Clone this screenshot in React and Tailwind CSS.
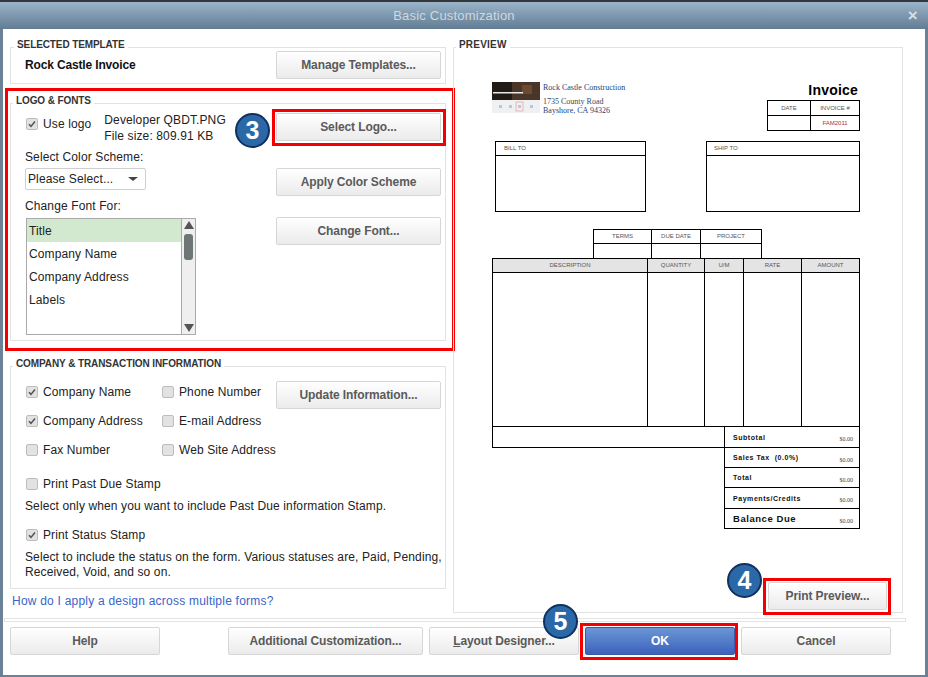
import React from 'react';

const FONT = "font-['Liberation_Sans',Arial,sans-serif]";

const Button = ({ children, className = '' }) => (
  <button className={`h-[28px] rounded-[2px] border border-[#d6d6d6] bg-gradient-to-b from-white to-[#ebebeb] text-[12px] font-bold tracking-[-0.1px] whitespace-nowrap text-[#5a5a5a] ${className}`}>
    {children}
  </button>
);

const Check = ({ checked, label, className = '' }) => (
  <div className={`flex items-center gap-[5px] text-[12px] tracking-[0.12px] whitespace-nowrap text-[#222] ${className}`}>
    <span className="flex h-[12px] w-[12px] items-center justify-center rounded-[2px] border border-[#bdbdbd] bg-[#e2e2e2]">
      {checked && (
        <svg width="10" height="10" viewBox="0 0 10 10" fill="none">
          <path d="M2 5.2 L4 7.4 L8 2.6" stroke="#555" strokeWidth="1.6" />
        </svg>
      )}
    </span>
    {label}
  </div>
);

const Group = ({ title, children, className = '', legendClass = 'left-[3px] tracking-[-0.1px]' }) => (
  <div className={`relative border border-[#e2e2e2] ${className}`}>
    <div className={`absolute -top-[10px] bg-white px-[3px] text-[10px] leading-[14px] font-bold text-[#333] ${legendClass}`}>
      {title}
    </div>
    {children}
  </div>
);

const Badge = ({ n, className = '' }) => (
  <div className={`absolute flex h-[35px] w-[35px] items-center justify-center rounded-full border-2 border-[#10305f] bg-[#2b68a8] text-[25px] font-bold text-white ${className}`}>
    {n}
  </div>
);

const Red = ({ className = '' }) => (
  <div className={`pointer-events-none absolute border-[3px] border-[#f50000] ${className}`} />
);

const Cell = ({ children, className = '' }) => (
  <div className={`flex items-center justify-center text-[6px] text-[#555] ${className}`}>{children}</div>
);

const TotalRow = ({ label, className = '', labelClass = 'text-[7px]' }) => (
  <div className={`flex items-center justify-between border-t border-black pr-[6px] pl-[8px] ${className}`}>
    <span className={`mt-[2px] font-bold tracking-[0.55px] whitespace-pre text-[#111] ${labelClass}`}>{label}</span>
    <span className="mt-[5px] font-['Liberation_Serif',serif] text-[6px] text-[#444]">$0.00</span>
  </div>
);

const Invoice = () => (
  <div className="ml-[38px] w-[368px] pt-[34px]">
    <div className="flex h-[49px] justify-between">
      <div className="flex">
        <svg width="48" height="31" viewBox="0 0 48 31">
          <rect width="48" height="31" fill="#eef0f1" />
          <rect width="48" height="18" fill="#221a14" />
          <rect x="20" width="28" height="18" fill="#4a3526" />
          <rect x="30" y="3" width="10" height="9" fill="#6b4a30" />
          <rect x="1" y="10" width="30" height="1.5" fill="#e8e8e8" />
          <rect x="24" y="20" width="7" height="9" fill="none" stroke="#e8a0a0" strokeWidth="0.7" />
          <rect x="7" y="23" width="3" height="3" fill="#b8c8d8" />
          <rect x="17" y="23" width="3" height="3" fill="#b8c8d8" />
          <rect x="26" y="23" width="3" height="3" fill="#b8c8d8" />
          <rect x="38" y="23" width="3" height="3" fill="#b8c8d8" />
        </svg>
        <div className="ml-[3px] font-['Liberation_Serif',serif] text-[8px] leading-[9px] text-[#1f3f73]">
          <div className="mt-[1px]">Rock Castle Construction</div>
          <div className="mt-[5px] text-[#3a4a5a]">1735 County Road</div>
          <div>Bayshore, CA 94326</div>
        </div>
      </div>
      <div className="flex w-[93px] flex-col">
        <div className="h-[19px] pt-[1px] pr-[2px] text-right text-[14px] leading-[14px] font-bold tracking-[0.2px] text-black">Invoice</div>
        <div className="h-[31px] border border-black">
          <div className="flex h-[15px] border-b border-black">
            <Cell className="w-[43px] border-r border-black">DATE</Cell>
            <Cell className="flex-1 text-[#8a4a4a]">INVOICE #</Cell>
          </div>
          <div className="flex h-[14px]">
            <div className="w-[43px] border-r border-black" />
            <Cell className="flex-1 text-[#a33]">FAM2011</Cell>
          </div>
        </div>
      </div>
    </div>
    <div className="mt-[10px] flex justify-between pl-[3px]">
      <div className="h-[71px] w-[151px] border border-black">
        <div className="flex h-[14px] items-center border-b border-black pl-[8px] text-[6px] text-[#555]">BILL TO</div>
      </div>
      <div className="h-[71px] w-[154px] border border-black">
        <div className="flex h-[14px] items-center border-b border-black pl-[7px] text-[6px] text-[#555]">SHIP TO</div>
      </div>
    </div>
    <div className="mt-[17px] ml-[101px] h-[29px] w-[169px] border-x border-t border-black">
      <div className="flex h-[14px] border-b border-black">
        <Cell className="w-[58px] border-r border-black">TERMS</Cell>
        <Cell className="w-[49px] border-r border-black">DUE DATE</Cell>
        <Cell className="flex-1 text-[#8a4a4a]">PROJECT</Cell>
      </div>
      <div className="flex h-[14px]">
        <div className="w-[58px] border-r border-black" />
        <div className="w-[49px] border-r border-black" />
      </div>
    </div>
    <div className="border border-black">
      <div className="flex h-[14px] border-b border-black bg-[#e4e4e4]">
        <Cell className="w-[155px] border-r border-black">DESCRIPTION</Cell>
        <Cell className="w-[57px] border-r border-black">QUANTITY</Cell>
        <Cell className="w-[39px] border-r border-black">U/M</Cell>
        <Cell className="w-[58px] border-r border-black">RATE</Cell>
        <Cell className="flex-1">AMOUNT</Cell>
      </div>
      <div className="flex h-[153px]">
        <div className="w-[155px] border-r border-black" />
        <div className="w-[57px] border-r border-black" />
        <div className="w-[39px] border-r border-black" />
        <div className="w-[58px] border-r border-black" />
      </div>
    </div>
    <div className="-mt-px flex">
      <div className="h-[22px] w-[232px] border-y border-l border-black" />
      <div className="w-[136px] border-x border-b border-black">
        <TotalRow label="Subtotal" className="h-[21px]" />
        <TotalRow label="Sales Tax  (0.0%)" className="h-[20px]" />
        <TotalRow label="Total" className="h-[20px]" />
        <TotalRow label="Payments/Credits" className="h-[21px]" />
        <TotalRow label="Balance Due" className="h-[20px]" labelClass="text-[9.5px]" />
      </div>
    </div>
  </div>
);

export default function App() {
  return (
    <div className={`flex h-[677px] w-[928px] flex-col overflow-hidden bg-[#6b8196] ${FONT}`}>
      <div className="h-[2px] bg-[#33363b]" />
      <div className="relative flex h-[27px] items-center justify-center bg-gradient-to-b from-[#9ab5ca] to-[#627c93] pr-[20px] text-[13px] tracking-[0.2px] text-[#cfd8df]">
        Basic Customization
        <span className="absolute top-[5px] right-[10px] text-[17px] leading-[17px] font-bold text-[#d9dde0]">×</span>
      </div>
      <div className="mr-[3px] mb-[2px] ml-[3px] flex-1 bg-white">
        <div className="flex pt-[18px] pl-[7px]">
          <div className="w-[436px]">
            <Group title="SELECTED TEMPLATE" className="flex h-[37px] items-start justify-between pt-[3px] pr-[4px] pl-[14px]">
              <span className="mt-[5px] text-[12px] font-bold tracking-[-0.15px] text-[#111]">Rock Castle Invoice</span>
              <Button className="w-[165px]">Manage Templates...</Button>
            </Group>

            <Group title="LOGO & FONTS" className="mt-[19px] flex h-[238px] pt-[9px] pr-[4px] pl-[14px]" legendClass="left-[2px] tracking-[-0.1px]">
              <Red className="-top-[16px] -right-[10px] -bottom-[11px] -left-[6px]" />
              <div className="flex-1 text-[12px] tracking-[0.12px] text-[#222]">
                <div className="flex">
                  <Check checked label="Use logo" className="mt-[2px] ml-[1px] self-start" />
                  <div className="-mt-px ml-[13px] leading-[16px]">
                    <div>Developer QBDT.PNG</div>
                    <div>File size: 809.91 KB</div>
                  </div>
                </div>
                <div className="mt-[6px] leading-[14px]">Select Color Scheme:</div>
                <div className="mt-[4px] flex h-[22px] w-[121px] items-center justify-between rounded-[2px] border border-[#cfcfcf] pr-[7px] pl-[2px]">
                  Please Select...
                  <span className="h-0 w-0 border-x-[5px] border-t-[4px] border-x-transparent border-t-[#444]" />
                </div>
                <div className="mt-[9px] leading-[14px]">Change Font For:</div>
                <div className="mt-[5px] ml-[1px] flex h-[117px] w-[170px] border border-[#aaa]">
                  <div className="w-[155px] border-r border-[#aaa]">
                    <div className="flex h-[23px] items-center bg-[#d2e8cf] pl-[2px]">Title</div>
                    <div className="flex h-[23px] items-center pl-[2px]">Company Name</div>
                    <div className="flex h-[23px] items-center pl-[2px]">Company Address</div>
                    <div className="flex h-[23px] items-center pl-[2px]">Labels</div>
                  </div>
                  <div className="flex flex-1 flex-col items-center justify-between bg-[#efefef] py-[2px]">
                    <span className="h-0 w-0 border-x-[5px] border-b-[8px] border-x-transparent border-b-[#555]" />
                    <span className="mt-[5px] mb-auto h-[26px] w-[9px] rounded-[3px] bg-[#6e7676]" />
                    <span className="h-0 w-0 border-x-[5px] border-t-[8px] border-x-transparent border-t-[#555]" />
                  </div>
                </div>
              </div>
              <div className="flex w-[165px] flex-col">
                <Button>Select Logo...</Button>
                <Button className="mt-[27px]">Apply Color Scheme</Button>
                <Button className="mt-[21px]">Change Font...</Button>
              </div>
              <Badge n="3" className="top-[9px] left-[224px]" />
              <Red className="top-[5px] -right-px h-[37px] w-[174px]" />
            </Group>

            <Group title="COMPANY & TRANSACTION INFORMATION" className="mt-[25px] h-[223px] pt-[14px] pr-[4px] pl-[15px]" legendClass="left-[2px] tracking-[-0.1px]">
              <div className="flex">
                <div className="grid w-[250px] grid-cols-[136px_114px] gap-y-[11px] pt-[2px]">
                  <Check checked label="Company Name" />
                  <Check label="Phone Number" />
                  <Check checked label="Company Address" />
                  <Check label="E-mail Address" />
                  <Check label="Fax Number" />
                  <Check label="Web Site Address" />
                </div>
                <Button className="w-[165px]">Update Information...</Button>
              </div>
              <Check label="Print Past Due Stamp" className="mt-[16px]" />
              <div className="mt-[6px] -ml-px text-[12px] leading-[14px] tracking-[0.12px] text-[#222]">
                Select only when you want to include Past Due information Stamp.
              </div>
              <Check checked label="Print Status Stamp" className="mt-[13px]" />
              <div className="mt-[6px] -ml-px w-[424px] text-[12px] leading-[15px] tracking-[0.12px] text-[#222]">
                Select to include the status on the form. Various statuses are, Paid, Pending, Received, Void, and so on.
              </div>
            </Group>

            <div className="mt-[5px] ml-[2px] text-[12px] leading-[14px] tracking-[0.22px] text-[#3a63c8]">
              How do I apply a design across multiple forms?
            </div>
          </div>

          <Group title="PREVIEW" className="relative ml-[7px] h-[566px] w-[450px]" legendClass="left-[2px] tracking-[0.2px]">
            <Invoice />
            <Button className="absolute top-[534px] right-[15px] w-[119px]">Print Preview...</Button>
            <Red className="top-[530px] right-[11px] h-[37px] w-[128px]" />
            <Badge n="4" className="top-[515px] right-[140px]" />
          </Group>
        </div>

        <div className="mt-[5px] mr-[19px] ml-px h-[4px] border border-[#e4e4e4]" />

        <div className="relative mt-[5px] flex gap-[6px] pl-[7px]">
          <Button className="mr-[62px] w-[150px]">Help</Button>
          <Button className="w-[195px]">Additional Customization...</Button>
          <Button className="w-[150px]">
            <span className="underline">L</span>ayout Designer...
          </Button>
          <button className="h-[28px] w-[150px] rounded-[2px] border border-[#3a5ca8] bg-gradient-to-b from-[#6c96d6] to-[#3d62bc] text-[12px] font-bold text-white">
            OK
          </button>
          <Button className="w-[150px]">Cancel</Button>
          <Red className="-top-[4px] left-[577px] h-[37px] w-[158px]" />
          <Badge n="5" className="-top-[23px] left-[540px]" />
        </div>
      </div>
    </div>
  );
}
